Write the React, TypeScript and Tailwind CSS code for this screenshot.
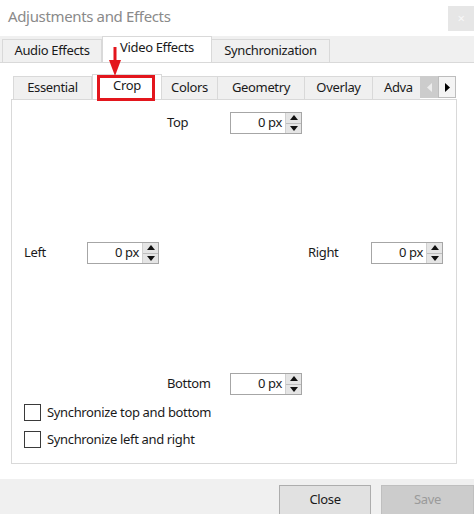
import React from "react";

const font = { fontFamily: '"Noto Sans", "Open Sans", sans-serif' };

function SpinBox() {
  return (
    <div className="flex h-[22px] w-[72px] border border-[#a6a6a6] bg-white">
      <div className="flex flex-1 items-center justify-end pr-[3px] text-[13px] text-[#1a1a1a]">0 px</div>
      <div className="flex w-[16px] flex-col bg-[#e5e5e5] border-l border-[#d0d0d0]">
        <div className="flex flex-1 items-center justify-center border-b border-[#bdbdbd]">
          <svg width="8" height="5" viewBox="0 0 8 5">
            <path d="M0 5 L4 0 L8 5 Z" fill="#111" />
          </svg>
        </div>
        <div className="flex flex-1 items-center justify-center">
          <svg width="8" height="5" viewBox="0 0 8 5">
            <path d="M0 0 L4 5 L8 0 Z" fill="#111" />
          </svg>
        </div>
      </div>
    </div>
  );
}

function Field({ label }: { label: string }) {
  return (
    <div className="flex h-[22px] items-center">
      <span className="w-[63px] text-[13px] text-[#1a1a1a]">{label}</span>
      <SpinBox />
    </div>
  );
}

function Check({ label }: { label: string }) {
  return (
    <div className="flex h-[17px] items-center gap-[6px]">
      <div className="h-[17px] w-[17px] border border-[#3a3a3a] bg-white" />
      <span className="text-[13px] text-[#1a1a1a]">{label}</span>
    </div>
  );
}

const innerTabs = [
  { name: "Essential", w: "w-[79px]" },
  { name: "Crop", w: "w-[70px]", active: true },
  { name: "Colors", w: "w-[56px]" },
  { name: "Geometry", w: "w-[87px]" },
  { name: "Overlay", w: "w-[68px]" },
];

export default function App() {
  return (
    <div
      className="relative flex h-[514px] w-[474px] flex-col overflow-hidden bg-white tracking-[-0.35px]"
      style={font}
    >
      {/* Title bar */}
      <div className="flex h-[36px] shrink-0 items-start justify-between">
        <span className="pl-[8px] pt-[5px] text-[15px] text-[#8a8a8a]">Adjustments and Effects</span>
        <div className="mt-[6px] flex h-[25px] w-[26px] items-center justify-center bg-[#e6e6e6] text-[13px] text-[#f8f8f8]">
          ×
        </div>
      </div>

      {/* Outer tabs */}
      <div className="flex h-[26px] shrink-0 items-end bg-[#f0f0f0] pl-[2px] text-[13px] text-[#1a1a1a]">
        <div className="flex h-[23px] w-[100px] items-center justify-center border border-b-0 border-[#d9d9d9] bg-[#f0f0f0]">
          Audio Effects
        </div>
        <div className="flex h-[26px] w-[110px] items-center justify-center border border-b-0 border-[#d9d9d9] bg-white pb-[3px]">
          Video Effects
        </div>
        <div className="flex h-[23px] w-[118px] items-center justify-center border border-b-0 border-l-0 border-[#d9d9d9] bg-[#f0f0f0]">
          Synchronization
        </div>
      </div>

      {/* Outer pane */}
      <div className="flex flex-1 flex-col border-t border-[#d9d9d9] bg-white pb-[15px] pl-[11px] pr-[17px] pt-[11px]">
        {/* Inner tabs */}
        <div className="flex h-[25px] shrink-0 items-end pl-[2px] text-[13px] text-[#1a1a1a]">
          {innerTabs.map((t) =>
            t.active ? (
              <div
                key={t.name}
                className={`flex h-[25px] ${t.w} items-center justify-center border border-b-0 border-[#d9d9d9] bg-white pb-[3px]`}
              >
                {t.name}
              </div>
            ) : (
              <div
                key={t.name}
                className={`flex h-[23px] ${t.w} items-center justify-center border border-b-0 border-l-0 border-[#d9d9d9] bg-[#f0f0f0] first:border-l`}
              >
                {t.name}
              </div>
            )
          )}
          <div className="flex h-[23px] w-[47px] items-center overflow-hidden whitespace-nowrap border-t border-[#d9d9d9] bg-[#f0f0f0] pl-[11px]">
            Adva
          </div>
          <div className="mt-[2px] flex h-[22px] w-[18px] items-center justify-center self-start bg-[#cccccc]">
            <svg width="5" height="9" viewBox="0 0 5 9">
              <path d="M5 0 L0 4.5 L5 9 Z" fill="#ededed" />
            </svg>
          </div>
          <div className="mt-[2px] flex h-[22px] w-[18px] items-center justify-center self-start border border-[#bdbdbd] bg-[#f4f4f4]">
            <svg width="5" height="9" viewBox="0 0 5 9">
              <path d="M0 0 L5 4.5 L0 9 Z" fill="#000" />
            </svg>
          </div>
        </div>

        {/* Crop panel */}
        <div className="flex flex-1 flex-col border border-[#d9d9d9] bg-white px-[12px] pt-[12px]">
          <div className="flex pl-[143px]">
            <Field label="Top" />
          </div>
          <div className="mt-[108px] flex justify-between pr-[1px]">
            <Field label="Left" />
            <Field label="Right" />
          </div>
          <div className="mt-[109px] flex pl-[143px]">
            <Field label="Bottom" />
          </div>
          <div className="mt-[9px] flex flex-col gap-[10px]">
            <Check label="Synchronize top and bottom" />
            <Check label="Synchronize left and right" />
          </div>
        </div>
      </div>

      {/* Button bar */}
      <div className="flex h-[35px] shrink-0 justify-end gap-[10px] bg-[#f0f0f0] pt-[6px] text-[13px]">
        <div className="flex h-[30px] w-[92px] items-center justify-center border border-[#adadad] bg-[#e1e1e1] text-[#1a1a1a]">
          Close
        </div>
        <div className="flex h-[30px] w-[93px] items-center justify-center border border-[#bfbfbf] bg-[#cccccc] text-[#9a9a9a]">
          Save
        </div>
      </div>

      {/* Annotation: red arrow and highlight box */}
      <svg className="absolute left-[108px] top-[47px]" width="14" height="30" viewBox="0 0 14 30">
        <rect x="5.5" y="0" width="3" height="15" fill="#e3161d" />
        <path d="M1 13 L13 13 L7 29 Z" fill="#e3161d" />
      </svg>
      <div className="absolute left-[97px] top-[75px] h-[26px] w-[58px] border-[3px] border-[#e3161d]" />
    </div>
  );
}
